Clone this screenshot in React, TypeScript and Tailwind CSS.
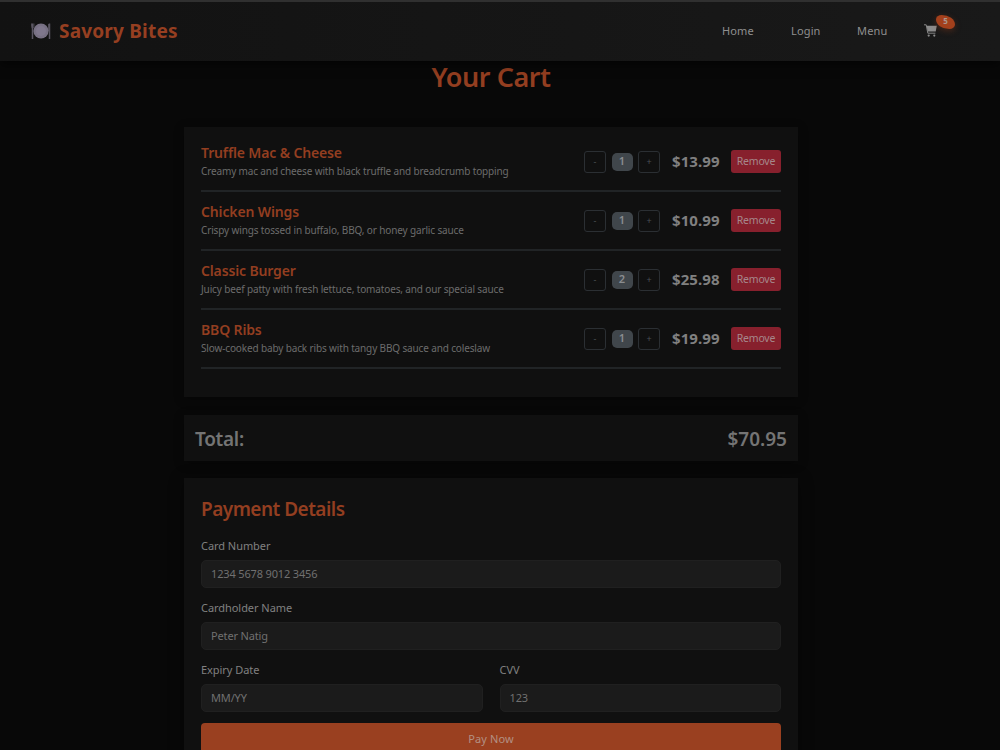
import React from "react";

const items = [
  { name: "Truffle Mac & Cheese", text: "Creamy mac and cheese with black truffle and breadcrumb topping", qty: 1, price: "$13.99" },
  { name: "Chicken Wings", text: "Crispy wings tossed in buffalo, BBQ, or honey garlic sauce", qty: 1, price: "$10.99" },
  { name: "Classic Burger", text: "Juicy beef patty with fresh lettuce, tomatoes, and our special sauce", qty: 2, price: "$25.98" },
  { name: "BBQ Ribs", text: "Slow-cooked baby back ribs with tangy BBQ sauce and coleslaw", qty: 1, price: "$19.99" },
];

function PlateIcon() {
  return (
    <svg width="20" height="20" viewBox="0 0 20 20" className="mr-2 shrink-0">
      <path d="M1.5 2.5v15.5M18.5 2.5v15.5" stroke="#5a5662" strokeWidth="1.5" />
      <path d="M0.4 2.5v3.2l1.1 1.5 1.4-1.5V2.5M17.6 3v7" stroke="#5a5662" strokeWidth="0.9" fill="none" />
      <circle cx="10" cy="10" r="7.6" fill="#777083" />
      <circle cx="10" cy="10" r="5" fill="#7f778c" />
    </svg>
  );
}

function CartIcon() {
  return (
    <svg width="13" height="13" viewBox="0 0 13 13">
      <path d="M0 0.8h2.2l1.6 8.4h7.6" stroke="#858585" strokeWidth="1" fill="none" />
      <path d="M2.6 1.7h10.2L11.7 7.6H3.7z" fill="#8c8c8c" />
      <circle cx="4.7" cy="11.6" r="1.1" fill="#8c8c8c" />
      <circle cx="10.3" cy="11.6" r="1.1" fill="#8c8c8c" />
    </svg>
  );
}

function Step({ children }: { children: React.ReactNode }) {
  return (
    <button className="flex h-[22px] w-[22px] items-center justify-center rounded-[3px] border border-[#2b2f33] text-[9px] text-[#4b5055]">
      {children}
    </button>
  );
}

function Field({ label, value }: { label: string; value: string }) {
  return (
    <label className="flex min-w-0 flex-1 flex-col">
      <span className="h-[20px] text-[11px] leading-[11px] tracking-[-0.05px] text-[#808080]">{label}</span>
      <span className="flex h-7 items-center rounded-[5px] border border-[#202020] bg-[#1b1b1b] px-[9px] text-[11px] tracking-[-0.15px] text-[#707070]">
        {value}
      </span>
    </label>
  );
}

export default function App() {
  return (
    <div className="h-[750px] w-full overflow-hidden bg-[#080808] font-['Noto_Sans','Open_Sans',sans-serif] text-[#808080]">
      <header className="relative z-10 flex h-[61px] items-center justify-between border-t-2 border-[#303030] bg-linear-to-r from-[#121212] to-[#191919] pr-[45px] pb-[2px] pl-[31px] shadow-[0_3px_10px_rgba(0,0,0,0.6)]">
        <div className="flex items-center">
          <PlateIcon />
          <span className="pt-[2px] text-[19px] leading-none font-bold tracking-[0.2px] whitespace-nowrap text-[#963f21]">Savory Bites</span>
        </div>
        <nav className="flex items-center text-[11px] leading-none tracking-[0.15px] text-[#8f8f8f]">
          <span className="w-[69px]">Home</span>
          <span className="w-[66px]">Login</span>
          <span className="w-[67px]">Menu</span>
          <span className="relative block h-[13px] w-[31px]">
            <CartIcon />
            <span className="absolute -top-[9px] left-[12px] flex h-[14px] w-[19px] items-start justify-center rounded-[30%_70%_30%_70%/30%_70%_30%_70%] bg-[#a3401c] pt-[1px] text-[8px] leading-[9px] font-bold tracking-normal text-[#ab968e] shadow-[0_2px_6px_rgba(167,65,28,0.35)]">
              5
            </span>
          </span>
        </nav>
      </header>
      <main className="ml-[184px] w-[614px]">
        <h1 className="flex h-[66px] justify-center pt-[2px] text-[27px] leading-7 font-semibold tracking-[-0.45px] text-[#933e20]">Your Cart</h1>
        <section className="h-[270px] bg-[#101010] px-[17px] pt-[6px] shadow-[0_2px_10px_rgba(0,0,0,0.3)]">
          {items.map((item) => (
            <div key={item.name} className="flex h-[59px] items-center justify-between border-b-2 border-[#212426]">
              <div className="flex flex-col">
                <span className="h-[20px] text-[14px] leading-[18px] font-semibold tracking-[-0.14px] whitespace-nowrap text-[#933e20]">{item.name}</span>
                <span className="text-[10px] leading-[15px] tracking-[-0.14px] whitespace-nowrap text-[#6c6c6c]">{item.text}</span>
              </div>
              <div className="flex items-center">
                <Step>-</Step>
                <span className="mx-[5.5px] flex h-[18px] w-[21px] items-center justify-center rounded-[5px] bg-[#40464b] text-[11px] font-semibold text-[#8a8d90]">
                  {item.qty}
                </span>
                <Step>+</Step>
                <span className="w-[71px] pl-[12px] text-[15px] font-bold tracking-[0.1px] whitespace-nowrap text-[#808080]">{item.price}</span>
                <button className="h-[23px] w-[50px] rounded-[3px] bg-[#87202d] text-[10.5px] leading-none tracking-[-0.2px] text-[#a6878b]">Remove</button>
              </div>
            </div>
          ))}
        </section>
        <section className="mt-[18px] flex h-[46px] items-center justify-between bg-[#101010] px-[11px] pt-[2px] text-[19px] font-semibold tracking-[-0.3px] text-[#747474] shadow-[0_2px_10px_rgba(0,0,0,0.3)]">
          <span>Total:</span>
          <span className="tracking-normal">$70.95</span>
        </section>
        <section className="mt-[17px] h-[300px] bg-[#101010] px-[17px] pt-[21px] shadow-[0_2px_14px_rgba(0,0,0,0.4)]">
          <h2 className="h-[41px] text-[19px] leading-[20px] font-semibold tracking-[-0.52px] text-[#933e20]">Payment Details</h2>
          <div className="flex flex-col gap-[14px]">
            <Field label="Card Number" value="1234 5678 9012 3456" />
            <Field label="Cardholder Name" value="Peter Natig" />
            <div className="flex gap-[17px]">
              <Field label="Expiry Date" value="MM/YY" />
              <Field label="CVV" value="123" />
            </div>
          </div>
          <button className="mt-[11px] flex h-8 w-full items-center justify-center rounded-[4px] bg-[#9a4020] text-[11px] tracking-[0.1px] text-[#b39083]">
            Pay Now
          </button>
        </section>
      </main>
    </div>
  );
}
